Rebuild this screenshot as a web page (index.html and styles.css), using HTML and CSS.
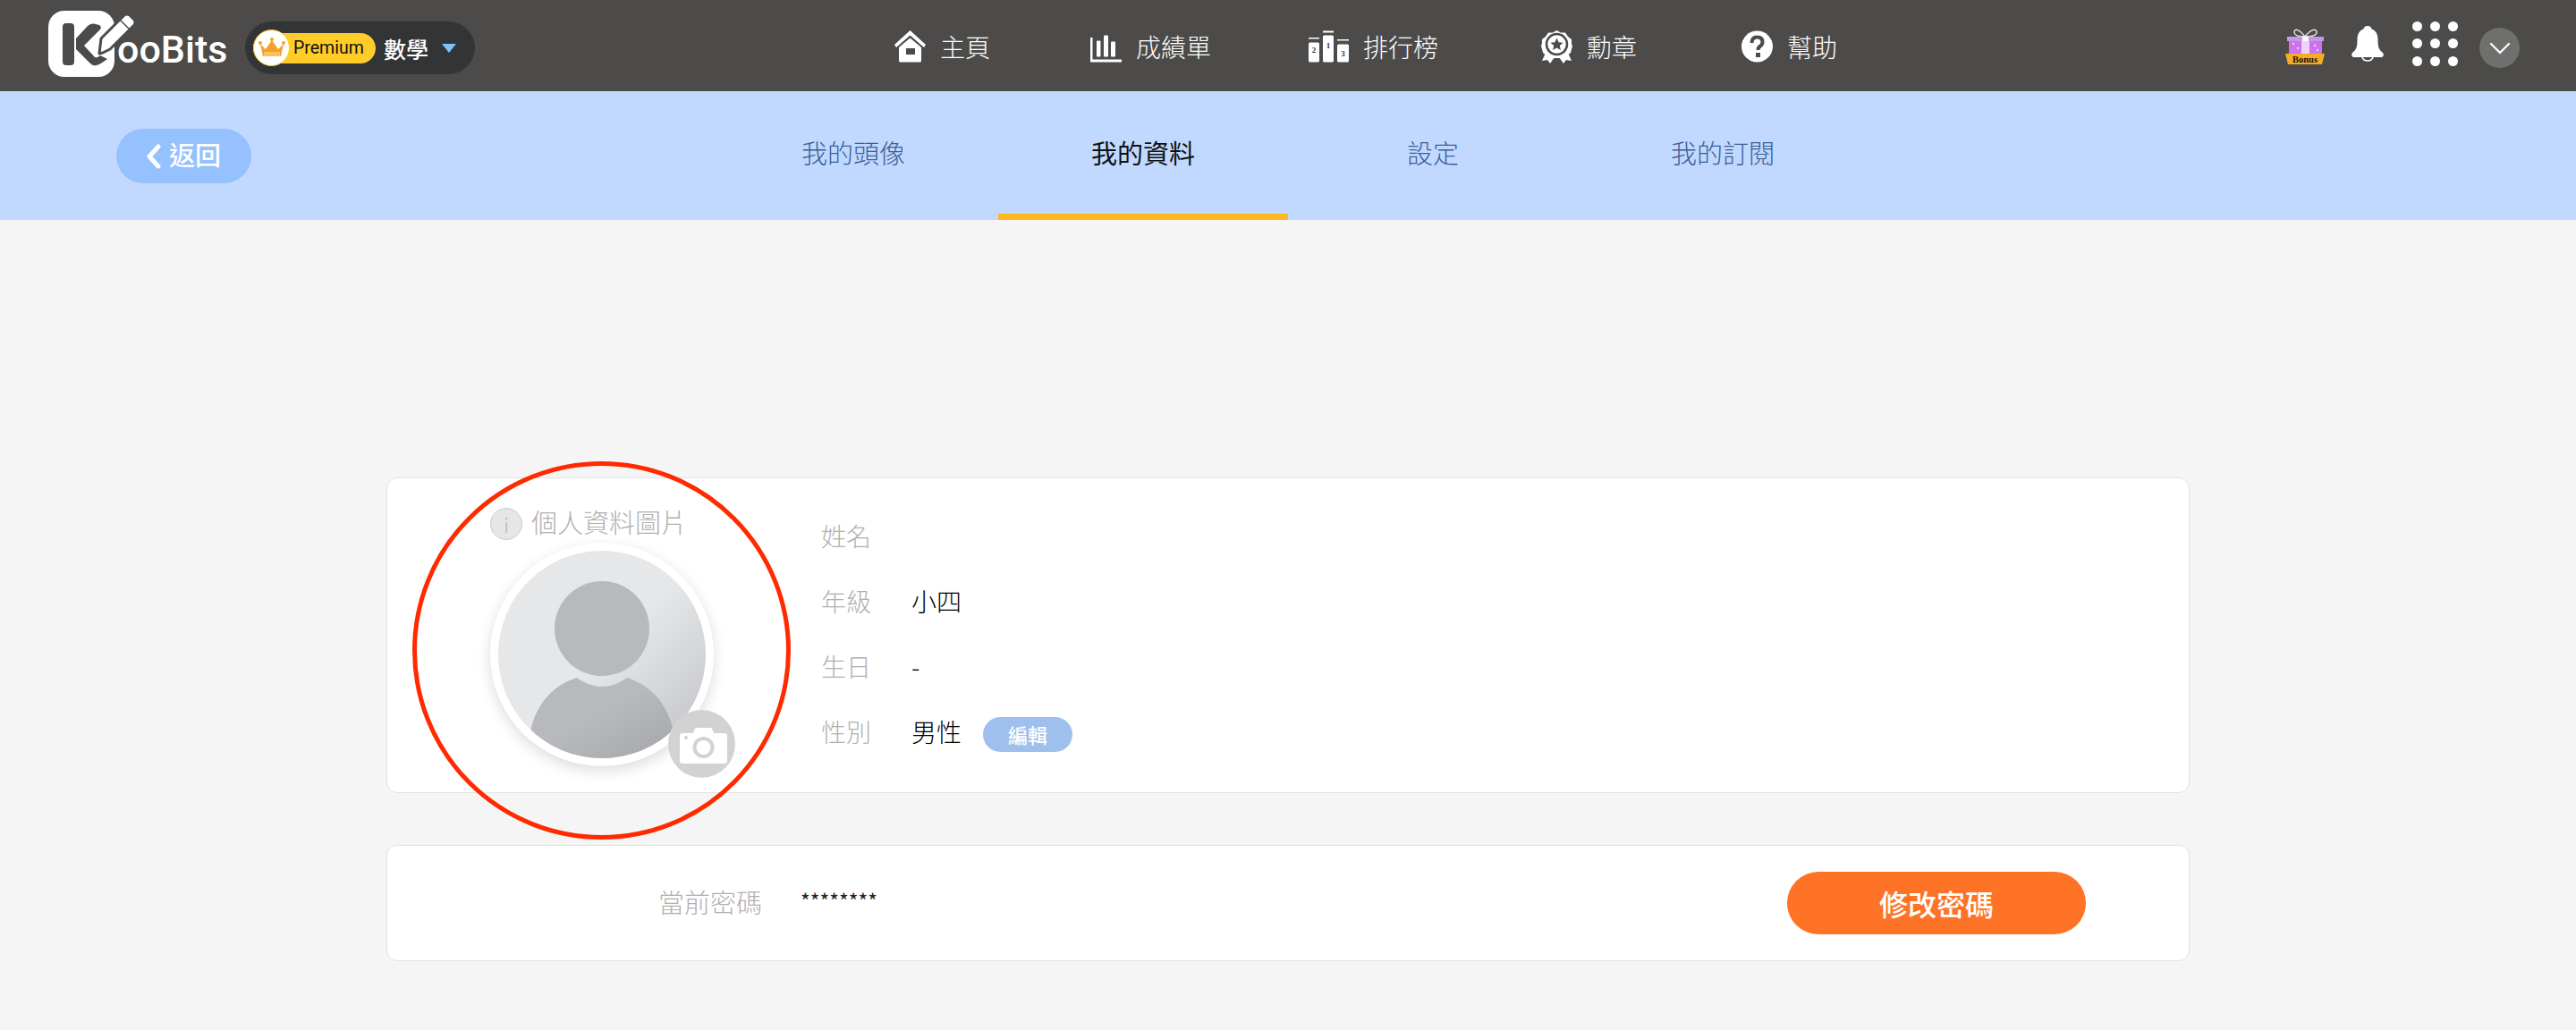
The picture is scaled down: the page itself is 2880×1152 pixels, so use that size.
FILE: index.html
```html
<!DOCTYPE html>
<html lang="zh-Hant">
<head>
<meta charset="utf-8">
<title>KooBits</title>
<link rel="stylesheet" href="styles.css">
</head>
<body>
<header class="topbar">
  <a class="logo">
    <svg class="logo-mark" width="98" height="78" viewBox="0 0 98 78">
      <rect x="0" y="2" width="74" height="74" rx="18" fill="#fff"/>
      <rect x="16" y="16" width="13" height="47" rx="4" fill="#4c4b49"/>
      <path d="M31 33 L44 19 Q47 16 51 16.500 L57 18 Q60 20 58 23 L40 41 L52 54 Q55 55 58 52 L66 56 Q58 62 54 63 Q50 64 47 61 L31 45 Z" fill="#4c4b49"/>
      <path d="M59 33 L85 7 Q88 5 91 7 L96 12 Q98 15 96 18 L69 45 L61 49 L57 50 Z" fill="#fff" stroke="#4c4b49" stroke-width="3" stroke-linejoin="round"/>
      <path d="M80 12 L91 23" stroke="#4c4b49" stroke-width="1.500"/>
    </svg>
    <span class="logo-text">ooBits</span>
  </a>
  <div class="subject">
    <span class="premium">
      <span class="crown">
        <svg width="30" height="24" viewBox="0 0 30 24">
          <path d="M2 7 L8 13 L15 3 L22 13 L28 7 L25 21 L5 21 Z" fill="#f6a02c"/>
          <circle cx="2" cy="6" r="2" fill="#f6a02c"/>
          <circle cx="15" cy="2" r="2" fill="#f6a02c"/>
          <circle cx="28" cy="6" r="2" fill="#f6a02c"/>
          <rect x="6" y="16" width="18" height="5" fill="#fbc25e"/>
        </svg>
      </span>
      <span class="premium-text">Premium</span>
    </span>
    <span class="subject-name">數學</span>
    <span class="caret"></span>
  </div>
  <nav class="mainnav">
    <a class="nav-item">
      <svg class="nav-icon" width="35" height="36" viewBox="0 0 35 36">
        <path fill="#fff" d="M17.500 0 L35 16 L33 19 L17.500 5.500 L2 19 L0 16 Z"/>
        <path fill="#fff" fill-rule="evenodd" d="M5 19 L17.500 8.500 L30 19 V34 Q30 35.500 28.500 35.500 H6.500 Q5 35.500 5 34 Z M13 20 V27 H23 V20 Z"/>
      </svg>
      <span>主頁</span>
    </a>
    <a class="nav-item">
      <svg class="nav-icon" width="36" height="36" viewBox="0 0 36 36">
        <path fill="#fff" d="M1 8 H3.500 V32.500 H36 V35.500 H1 Z"/>
        <rect x="8" y="11.500" width="4.500" height="18" rx="1" fill="#fff"/>
        <rect x="16" y="5.500" width="5" height="24" rx="1" fill="#fff"/>
        <rect x="24" y="12.500" width="5" height="17" rx="1" fill="#fff"/>
      </svg>
      <span>成績單</span>
    </a>
    <a class="nav-item">
      <svg class="nav-icon" width="46" height="36" viewBox="0 0 46 36">
        <path fill="#fff" d="M1 8 H13 V9.500 H1 Z M17 0.500 H29 V2.500 H17 Z M33 10 H46 V11.500 H33 Z"/>
        <rect x="1" y="13.500" width="12" height="22" rx="1.500" fill="#fff"/>
        <rect x="17" y="5.500" width="12" height="30" rx="1.500" fill="#fff"/>
        <rect x="33" y="15.500" width="13" height="20" rx="1.500" fill="#fff"/>
        <text class="rank" x="7" y="25" text-anchor="middle">2</text>
        <text class="rank" x="23" y="20" text-anchor="middle">1</text>
        <text class="rank" x="39.500" y="29" text-anchor="middle">3</text>
      </svg>
      <span>排行榜</span>
    </a>
    <a class="nav-item">
      <svg class="nav-icon" width="35" height="37" viewBox="0 0 35 37">
        <path fill="#fff" d="M5 25 L1 34 L7 33 L10 37 L15 30 Z M30 25 L34 34 L28 33 L25 37 L20 30 Z"/>
        <path fill="#fff" d="M17.500 0 L22 2.500 L27 2.500 L30 7 L34 10 L34 15 L35 17.500 L34 21 L33 25 L29 28 L25 31 L17.500 31 L10 31 L6 28 L2 25 L1 21 L0 17.500 L1 14 L1 10 L5 7 L8 2.500 L13 2.500 Z"/>
        <circle cx="17.500" cy="15.500" r="11.500" fill="none" stroke="#4c4b49" stroke-width="2.500"/>
        <path fill="#4c4b49" d="M17.500 8.500 L19.600 13.200 L24.600 13.700 L20.800 17 L21.900 22 L17.500 19.400 L13.100 22 L14.200 17 L10.400 13.700 L15.400 13.200 Z"/>
      </svg>
      <span>勳章</span>
    </a>
    <a class="nav-item">
      <svg class="nav-icon" width="35" height="36" viewBox="0 0 35 36">
        <circle cx="17.500" cy="18" r="17.500" fill="#fff"/>
        <path d="M11.500 14 Q11.500 7.500 17.500 7.500 Q23.500 7.500 23.500 13 Q23.500 16 20.500 18 Q18.500 19.300 18.500 22" fill="none" stroke="#4c4b49" stroke-width="4"/>
        <rect x="16" y="25" width="5" height="5" fill="#4c4b49"/>
      </svg>
      <span>幫助</span>
    </a>
  </nav>
  <div class="tools">
    <svg width="44" height="41" viewBox="0 0 44 41">
      <path d="M22 10 C16 2 10 0 10 5 C10 9 16 10 22 10 C28 10 35 9 35 5 C35 0 28 2 22 10 Z" fill="none" stroke="#e6e6e6" stroke-width="1.400"/>
      <rect x="4" y="14" width="37" height="15" fill="#cc72ea"/>
      <rect x="2" y="10" width="41" height="5" fill="#c896e8"/>
      <rect x="19" y="10" width="7" height="5" fill="#fff"/>
      <rect x="18" y="15" width="9" height="14" fill="#efd2f8"/>
      <circle cx="9" cy="18" r="1.200" fill="#efd2f8"/>
      <circle cx="14" cy="23" r="1.200" fill="#efd2f8"/>
      <circle cx="33" cy="20" r="1.200" fill="#efd2f8"/>
      <circle cx="36" cy="25" r="1.200" fill="#efd2f8"/>
      <path d="M0 29 H44 L41 41 H3 Z" fill="#f5ac23"/>
      <text class="bonus" x="22" y="38.500" text-anchor="middle">Bonus</text>
    </svg>
    <svg class="bell" width="36" height="40" viewBox="0 0 36 40">
      <path fill="#fff" d="M18 0 C21 0 22 1.500 22.500 3.500 C28 5.500 29.500 10 29.500 16 C29.500 24 31 27 35 30 C36.500 31.500 36 35 33 35 L3 35 C0 35 -0.500 31.500 1 30 C5 27 6.500 24 6.500 16 C6.500 10 8 5.500 13.500 3.500 C14 1.500 15 0 18 0 Z"/>
      <path d="M12 35 C13 38 15 39 18 39 C21 39 23 38 24 35" fill="none" stroke="#fff" stroke-width="1.600"/>
    </svg>
    <div class="dots">
      <i></i><i></i><i></i><i></i><i></i><i></i><i></i><i></i><i></i>
    </div>
    <div class="account">
      <svg width="24" height="14" viewBox="0 0 24 14"><path d="M2 2 L12 12 L22 2" fill="none" stroke="#fff" stroke-width="2.200" stroke-linecap="round"/></svg>
    </div>
  </div>
</header>

<div class="subbar">
  <a class="back">
    <svg width="16" height="28" viewBox="0 0 16 28"><path d="M13 3 L3 14 L13 25" fill="none" stroke="#fff" stroke-width="5" stroke-linecap="round" stroke-linejoin="round"/></svg>
    <span class="back-text">返回</span>
  </a>
  <nav class="tabs">
    <a class="tab">我的頭像</a>
    <a class="tab tab-active">我的資料</a>
    <a class="tab">設定</a>
    <a class="tab">我的訂閱</a>
  </nav>
</div>

<main class="content">
  <section class="card profile">
    <div class="photo-col">
      <div class="photo-label">
        <span class="info">i</span>
        <span class="photo-title">個人資料圖片</span>
      </div>
      <div class="avatar">
        <svg width="232" height="232" viewBox="0 0 232 232">
          <defs>
            <linearGradient id="bg" x1="0" y1="0" x2="1" y2="1">
              <stop offset="0.5" stop-color="#e6e7e9"/>
              <stop offset="1" stop-color="#bfc0c3"/>
            </linearGradient>
            <linearGradient id="fg" x1="0" y1="0" x2="1" y2="1">
              <stop offset="0.45" stop-color="#b8b9bc"/>
              <stop offset="1" stop-color="#a3a4a8"/>
            </linearGradient>
            <clipPath id="round"><circle cx="116" cy="116" r="116"/></clipPath>
          </defs>
          <g clip-path="url(#round)">
            <rect width="232" height="232" fill="url(#bg)"/>
            <circle cx="116" cy="87" r="53" fill="#b8b9bc"/>
            <path fill="url(#fg)" d="M37 198 C44 170 62 150 88 142 Q116 162 144 142 C170 150 188 170 195 198 L204 240 L28 240 Z"/>
          </g>
        </svg>
        <span class="camera">
          <svg width="53" height="40" viewBox="0 0 53 40">
            <path fill="#fff" fill-rule="evenodd" d="M3 6 H15 L17 1 Q17.500 0 19 0 H34 Q35.500 0 36 1 L38 6 H50 Q53 6 53 9 V37 Q53 40 50 40 H3 Q0 40 0 37 V9 Q0 6 3 6 Z M26.500 10 A12 12 0 1 0 26.500 34 A12 12 0 1 0 26.500 10 Z"/>
            <circle cx="26.500" cy="22" r="8" fill="#fff"/>
            <circle cx="7" cy="11" r="2" fill="#d2d2d2"/>
          </svg>
        </span>
      </div>
    </div>
    <dl class="fields">
      <div class="field"><dt>姓名</dt><dd></dd></div>
      <div class="field"><dt>年級</dt><dd>小四</dd></div>
      <div class="field"><dt>生日</dt><dd>-</dd></div>
      <div class="field"><dt>性別</dt><dd>男性<a class="edit">編輯</a></dd></div>
    </dl>
    <div class="annotation"></div>
  </section>
  <section class="card password">
    <span class="pw-label">當前密碼</span>
    <span class="pw-value">********</span>
    <a class="pw-button">修改密碼</a>
  </section>
</main>
</body>
</html>
```
FILE: styles.css
```css
* { box-sizing: border-box; }
html, body { margin: 0; height: 100%; }
body {
  background: #f5f5f5;
  font-family: "Noto Sans CJK TC", "Noto Sans", sans-serif;
  color: #222;
  overflow: hidden;
  font-size: 28px;
}
a { color: inherit; text-decoration: none; }

/* top bar */
.topbar {
  height: 102px;
  background: #4c4b49;
  display: flex;
  align-items: center;
  padding: 0 63px 0 54px;
  color: #fff;
}
.logo { display: flex; align-items: flex-start; width: 220px; height: 78px; margin-top: -4px; }
.logo-mark { flex: none; position: relative; z-index: 1; }
.logo-text {
  font-family: Roboto, sans-serif;
  font-weight: 500;
  font-size: 43px;
  line-height: 50px;
  margin: 20px 0 0 -21px;
}
.subject {
  width: 257px;
  height: 59px;
  border-radius: 30px;
  background: #333436;
  display: flex;
  align-items: center;
  padding-left: 9px;
  margin-top: 5px;
}
.premium {
  width: 137px;
  height: 34px;
  border-radius: 17px;
  background: #ffcc29;
  display: flex;
  align-items: center;
  color: #111;
}
.crown {
  width: 41px;
  height: 41px;
  flex: none;
  border-radius: 50%;
  background: #fff;
  border: 1px solid #ffcc29;
  display: flex;
  align-items: center;
  justify-content: center;
}
.premium-text { font-family: Roboto, sans-serif; font-size: 19.500px; margin-left: 4px; }
.subject-name { font-size: 25px; font-weight: 500; line-height: 34px; margin-left: 9px; }
.caret {
  width: 0;
  height: 0;
  margin-left: 15px;
  border-left: 8px solid transparent;
  border-right: 8px solid transparent;
  border-top: 10px solid #7cc4fb;
}
.mainnav {
  display: grid;
  grid-template-columns: 218px 244px 261px 224px auto;
  margin-left: 469px;
  margin-top: 2px;
}
.nav-item { display: flex; align-items: center; gap: 16px; font-size: 28px; font-weight: 300; line-height: 36px; }
.nav-icon { flex: none; }
.rank { font-family: "Liberation Serif", serif; font-size: 9px; font-weight: 700; fill: #333; }
.tools { margin-left: auto; display: flex; align-items: center; gap: 30px; }
.bonus { font-family: "Liberation Serif", serif; font-size: 10.500px; font-weight: 700; fill: #111; }
.bell { margin-right: 2px; margin-bottom: 4px; }
.dots {
  display: grid;
  grid-template-columns: repeat(3, 11px);
  grid-auto-rows: 11px;
  gap: 8.500px 9px;
  margin-bottom: 5px;
  width: 51px;
}
.dots i { background: #fff; border-radius: 50%; }
.account {
  width: 45px;
  height: 45px;
  margin-left: -6px;
  margin-top: 5px;
  border-radius: 50%;
  background: #6f6f6e;
  display: flex;
  align-items: center;
  justify-content: center;
}

/* sub bar */
.subbar {
  height: 144px;
  background: #c1d9ff;
  display: flex;
  align-items: center;
  padding-left: 130px;
}
.back {
  width: 151px;
  height: 61px;
  margin-top: 1px;
  border-radius: 31px;
  background: #95c1ff;
  color: #fff;
  display: flex;
  align-items: center;
  justify-content: center;
  gap: 9px;
  font-weight: 500;
  font-size: 29px;
}
.back-text { padding-bottom: 6px; }
.tabs {
  margin-left: 511px;
  display: grid;
  grid-template-columns: repeat(4, 324px);
  height: 100%;
}
.tab {
  display: flex;
  align-items: center;
  justify-content: center;
  color: #3b5f99;
  font-size: 29px;
  font-weight: 300;
  border-bottom: 7px solid transparent;
  padding-bottom: 2px;
}
.tab-active { color: #111; font-weight: 400; border-bottom-color: #ffb81f; }

/* content */
.content { padding-top: 288px; }
.card {
  width: 2016px;
  margin: 0 auto;
  background: #fff;
  border: 1px solid #e2e2e2;
  border-radius: 12px;
}
.profile {
  height: 353px;
  display: flex;
  position: relative;
}
.photo-col { width: 485px; padding: 33px 0 0 115px; }
.photo-label {
  display: flex;
  align-items: center;
  gap: 10px;
  height: 36px;
  color: #b0b0b0;
  line-height: 36px;
}
.photo-title { font-size: 29px; font-weight: 300; padding-bottom: 6px; }
.info {
  width: 36px;
  height: 36px;
  border-radius: 50%;
  background: #e6e6e6;
  border: 1px solid #ccc;
  color: #b5b5b5;
  display: flex;
  align-items: center;
  justify-content: center;
  font-size: 22px;
  font-weight: 300;
}
.avatar {
  width: 250px;
  height: 250px;
  margin-top: 3px;
  border-radius: 50%;
  background: #fff;
  padding: 9px;
  position: relative;
  box-shadow: 0 5px 16px rgba(0, 0, 0, 0.14);
}
.avatar > svg { display: block; }
.camera {
  position: absolute;
  left: 199px;
  top: 187px;
  width: 75px;
  height: 76px;
  border-radius: 50%;
  background: #d2d2d2;
  display: flex;
  align-items: center;
  justify-content: center;
  padding: 4px 0 0 3px;
}
.fields { margin: 0; padding: 34px 0 0 0; display: grid; grid-auto-rows: 73px; align-content: start; }
.field { display: flex; align-items: center; height: 60px; }
.field dt { width: 101px; color: #b0b0b0; font-size: 28px; font-weight: 300; }
.field dd { margin: 0; display: flex; align-items: center; color: #000; font-size: 28px; font-weight: 300; }
.edit {
  width: 100px;
  height: 39px;
  margin: 6px 0 0 24px;
  border-radius: 20px;
  background: #9fbfec;
  color: #fff;
  font-size: 22px;
  font-weight: 500;
  display: flex;
  align-items: center;
  justify-content: center;
}
.annotation {
  position: absolute;
  left: 28px;
  top: -19px;
  width: 423px;
  height: 423px;
  border: 5px solid #ff2a00;
  border-radius: 50%;
  pointer-events: none;
}
.password {
  height: 130px;
  margin-top: 58px;
  display: flex;
  align-items: center;
  padding: 0 115px 0 303px;
}
.pw-label { color: #b0b0b0; font-size: 29px; font-weight: 300; width: 159px; margin-top: -4px; }
.pw-value { font-size: 23px; color: #222; margin-top: -6px; }
.pw-button {
  width: 334px;
  height: 70px;
  margin-left: auto;
  border-radius: 35px;
  background: #ff7327;
  color: #fff;
  font-size: 32px;
  font-weight: 500;
  display: flex;
  align-items: center;
  justify-content: center;
}
```
